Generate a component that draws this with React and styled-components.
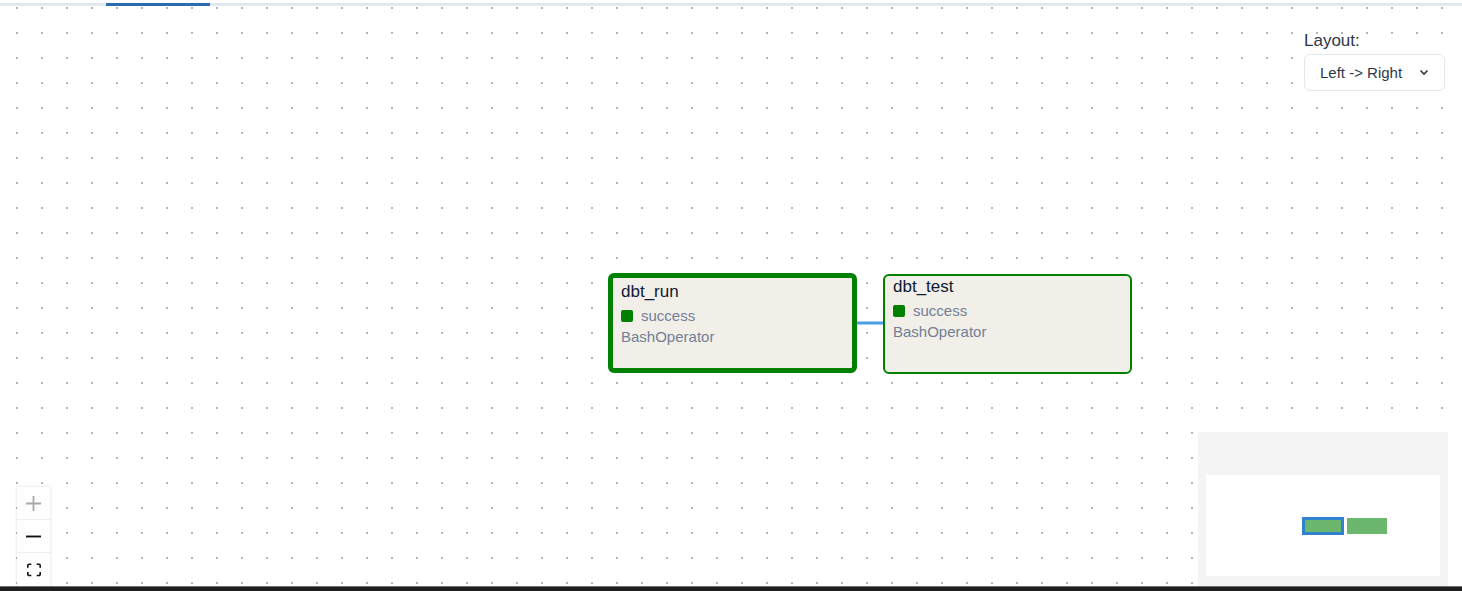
import React from "react";
import styled, { createGlobalStyle } from "styled-components";

const GlobalStyle = createGlobalStyle`
  html, body {
    margin: 0;
    padding: 0;
    background: #ffffff;
    overflow: hidden;
  }
  body {
    font-family: "Liberation Sans", Arial, sans-serif;
  }
`;

const Page = styled.div`
  display: flex;
  flex-direction: column;
  width: 1462px;
  height: 591px;
`;

const TabStrip = styled.div`
  padding-top: 3px;
  height: 3px;
`;

const TabTrack = styled.div`
  height: 3px;
  background: #e2e8f0;
`;

const ActiveTab = styled.div`
  margin-left: 106px;
  width: 104px;
  height: 3px;
  background: #2b6cb0;
`;

const Canvas = styled.div`
  position: relative;
  height: 580px;
  background-color: #ffffff;
  background-image: radial-gradient(circle at 1px 1px, #b4b4bb 0.8px, transparent 1.2px);
  background-size: 25px 25px;
  background-position: 16px 1px;
  overflow: hidden;
`;

const BottomBar = styled.div`
  height: 4px;
  border-top: 1px solid #6e6e6e;
  background: #1f1f1f;
`;

const LayoutPanel = styled.div`
  position: absolute;
  top: 25px;
  right: 17px;
  width: 141px;
  display: flex;
  flex-direction: column;
  gap: 3px;
`;

const LayoutLabel = styled.label`
  font-size: 17px;
  color: #2d3748;
`;

const Select = styled.div`
  box-sizing: border-box;
  height: 37px;
  display: flex;
  align-items: center;
  justify-content: space-between;
  padding: 0 15px 0 15px;
  border: 1px solid #e2e8f0;
  border-radius: 6px;
  background: #ffffff;
  font-size: 15px;
  color: #2d3748;
`;

const Node = styled.div`
  position: absolute;
  box-sizing: border-box;
  left: ${(p) => p.x}px;
  top: ${(p) => p.y}px;
  width: 249px;
  height: 100px;
  border: ${(p) => (p.selected ? 5 : 2)}px solid #008000;
  border-radius: 6px;
  background: #f2efe9;
  padding: ${(p) => (p.selected ? 4 : 1)}px 8px 0 8px;
  display: flex;
  flex-direction: column;
`;

const NodeTitle = styled.div`
  font-size: 17px;
  line-height: 20px;
  color: #0f1b33;
`;

const StatusRow = styled.div`
  margin-top: 4px;
  display: flex;
  align-items: center;
  gap: 8px;
  font-size: 15px;
  line-height: 20px;
  color: #718096;
`;

const StatusSquare = styled.span`
  width: 12px;
  height: 12px;
  border-radius: 2px;
  background: ${(p) => p.color};
`;

const Operator = styled.div`
  font-size: 15px;
  line-height: 21px;
  color: #718096;
`;

const EdgeLayer = styled.svg`
  position: absolute;
  left: 0;
  top: 0;
  width: 1462px;
  height: 580px;
  pointer-events: none;
`;

const Controls = styled.div`
  position: absolute;
  left: 17px;
  bottom: 0;
  display: flex;
  flex-direction: column;
  box-shadow: 0 0 2px 1px rgba(0, 0, 0, 0.08);
`;

const ControlButton = styled.button`
  box-sizing: border-box;
  width: 33px;
  height: 33px;
  padding: 0;
  border: none;
  border-bottom: 1px solid #eeeeee;
  background: #fefefe;
  display: flex;
  align-items: center;
  justify-content: center;
  color: ${(p) => (p.disabled ? "#a8a8a8" : "#111")};
  &:last-child {
    border-bottom: none;
  }
  svg {
    fill: currentColor;
  }
`;

const MiniMap = styled.svg`
  position: absolute;
  right: 14px;
  bottom: 0;
  width: 250px;
  height: 154px;
  background: #f4f4f4;
`;

const nodes = [
  { id: "dbt_run", x: 608, y: 267, selected: true },
  { id: "dbt_test", x: 883, y: 268, selected: false },
];

export default function App() {
  return (
    <Page>
      <GlobalStyle />
      <TabStrip>
        <TabTrack>
          <ActiveTab />
        </TabTrack>
      </TabStrip>
      <Canvas>
        <EdgeLayer viewBox="0 0 1462 580">
          <line x1="857" y1="317" x2="883" y2="317" stroke="#4a9fe4" strokeWidth="3" />
        </EdgeLayer>
        {nodes.map((n) => (
          <Node key={n.id} x={n.x} y={n.y} selected={n.selected}>
            <NodeTitle>{n.id}</NodeTitle>
            <StatusRow>
              <StatusSquare color="#008000" />
              success
            </StatusRow>
            <Operator>BashOperator</Operator>
          </Node>
        ))}

        <LayoutPanel>
          <LayoutLabel>Layout:</LayoutLabel>
          <Select>
            <span>Left -&gt; Right</span>
            <svg width="10" height="7" viewBox="0 0 10 7">
              <path d="M1.5 1.5 L5 5 L8.5 1.5" fill="none" stroke="#2d3748" strokeWidth="1.6" />
            </svg>
          </Select>
        </LayoutPanel>

        <Controls>
          <ControlButton disabled aria-label="zoom in">
            <svg width="15" height="15" viewBox="0 0 32 32">
              <path d="M32 17.9H17.9V32h-3.8V17.9H0v-3.8h14.1V0h3.8v14.1H32z" />
            </svg>
          </ControlButton>
          <ControlButton aria-label="zoom out">
            <svg width="15" height="3" viewBox="0 0 32 5">
              <path d="M0 0.5h32v4H0z" />
            </svg>
          </ControlButton>
          <ControlButton aria-label="fit view">
            <svg width="14" height="14" viewBox="0 0 32 30">
              <path d="M3.692 4.63c0-.53.4-.938.939-.938h5.215V0H4.708C2.13 0 0 2.054 0 4.63v5.216h3.692V4.631zM27.354 0h-5.2v3.692h5.17c.53 0 .984.4.984.939v5.215H32V4.631A4.624 4.624 0 0027.354 0zm.954 24.83c0 .532-.4.94-.939.94h-5.215v3.768h5.215c2.577 0 4.631-2.13 4.631-4.707v-5.139h-3.692v5.139zm-23.677.94c-.531 0-.939-.4-.939-.94v-5.138H0v5.139c0 2.577 2.13 4.707 4.708 4.707h5.138V25.77H4.631z" />
            </svg>
          </ControlButton>
        </Controls>

        <MiniMap viewBox="0 0 250 154">
          <rect x="8" y="43" width="234" height="101" fill="#ffffff" />
          <rect x="105.5" y="86.5" width="39" height="15" fill="#6db66d" stroke="#3182ce" strokeWidth="3" />
          <rect x="149" y="86" width="40" height="16" fill="#6db66d" />
        </MiniMap>
      </Canvas>
      <BottomBar />
    </Page>
  );
}
